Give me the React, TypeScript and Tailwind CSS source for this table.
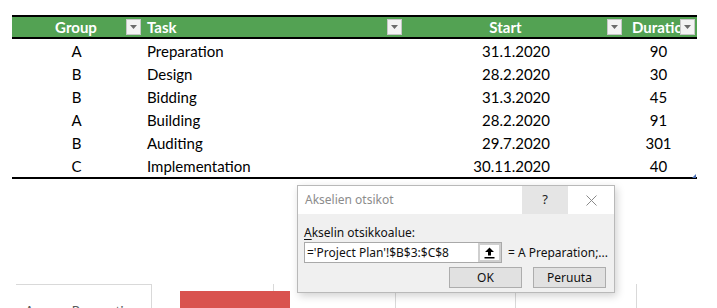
import React from 'react';

type Row = { group: string; task: string; start: string; duration: number };

const rows: Row[] = [
  { group: 'A', task: 'Preparation', start: '31.1.2020', duration: 90 },
  { group: 'B', task: 'Design', start: '28.2.2020', duration: 30 },
  { group: 'B', task: 'Bidding', start: '31.3.2020', duration: 45 },
  { group: 'A', task: 'Building', start: '28.2.2020', duration: 91 },
  { group: 'B', task: 'Auditing', start: '29.7.2020', duration: 301 },
  { group: 'C', task: 'Implementation', start: '30.11.2020', duration: 40 },
];

const FilterButton = () => (
  <div className="w-[15px] h-[16px] shrink-0 bg-[#f3f3f3] border border-[#c6c6c6] flex items-center justify-center">
    <svg width="7" height="4" viewBox="0 0 7 4">
      <path d="M0 0 L7 0 L3.5 4 Z" fill="#6b6b6b" />
    </svg>
  </div>
);

const UploadIcon = () => (
  <svg width="11" height="12" viewBox="0 0 11 12">
    <path d="M5.5 0.5 L10 5 L7 5 L7 8.5 L4 8.5 L4 5 L1 5 Z" fill="#000" />
    <rect x="0.5" y="10" width="10" height="1.5" fill="#000" />
  </svg>
);

const Dialog = () => (
  <div
    className="absolute left-[297px] top-[185px] w-[318px] h-[108px] border border-[#b9b9b9] bg-[#f0f0f0] shadow-[2px_3px_8px_rgba(0,0,0,0.18)] flex flex-col"
    style={{ fontFamily: '"Noto Sans", "Open Sans", sans-serif' }}
  >
    <div className="h-[28px] bg-white flex items-stretch">
      <div className="flex-1 flex items-center pl-[7px] text-[12px] text-[#8c8c8c]">Akselien otsikot</div>
      <div className="w-[46px] bg-[#e5e5e5] flex items-center justify-center text-[13px] text-[#222]">?</div>
      <div className="w-[46px] flex items-center justify-center">
        <svg width="11" height="11" viewBox="0 0 11 11">
          <path d="M0.5 0.5 L10.5 10.5 M10.5 0.5 L0.5 10.5" stroke="#8a8a8a" strokeWidth="1" />
        </svg>
      </div>
    </div>
    <div className="px-[6px] pt-[11px] flex flex-col">
      <div className="text-[12px] leading-[15px] text-[#111]">
        <span className="underline underline-offset-2">A</span>kselin otsikkoalue:
      </div>
      <div className="mt-[2px] flex items-center">
        <div className="w-[202px] h-[21px] border border-[#a9a9a9] bg-white flex items-stretch">
          <div className="flex-1 flex items-center pl-[2px] text-[12px] text-[#111] whitespace-nowrap overflow-hidden">
            ='Project Plan'!$B$3:$C$8
          </div>
          <div className="w-[23px] border-[2px] border-[#cfcfcf] bg-white flex items-center justify-center">
            <UploadIcon />
          </div>
        </div>
        <div className="ml-[6px] text-[12px] text-[#111] whitespace-nowrap">= A Preparation;...</div>
      </div>
      <div className="mt-[4px] flex justify-end gap-[11px] pr-[2px]">
        <div className="w-[73px] h-[21px] bg-[#e1e1e1] border border-[#adadad] flex items-center justify-center text-[12px] text-[#111]">OK</div>
        <div className="w-[73px] h-[21px] bg-[#e1e1e1] border border-[#adadad] flex items-center justify-center text-[12px] text-[#111]">Peruuta</div>
      </div>
    </div>
  </div>
);

const App: React.FC = () => {
  return (
    <div className="relative w-[717px] h-[308px] overflow-hidden bg-white" style={{ fontFamily: 'Lato, "Noto Sans", sans-serif' }}>
      <div className="pt-[15px] pl-[12px]">
        <div className="w-[685px]">
          {/* header */}
          <div className="h-[24px] border-t-2 border-b-2 border-black bg-[#53a253] flex items-center text-white font-bold text-[15px]">
            <div className="w-[130px] flex items-center">
              <div className="flex-1 text-center pl-[14px]">Group</div>
              <FilterButton />
              <div className="w-[1px]" />
            </div>
            <div className="w-[260px] flex items-center">
              <div className="flex-1 pl-[5px]">Task</div>
              <FilterButton />
            </div>
            <div className="w-[220px] flex items-center">
              <div className="flex-1 text-center pl-[2px]">Start</div>
              <FilterButton />
            </div>
            <div className="w-[75px] flex items-center">
              <div className="flex-1 pl-[10px] whitespace-nowrap overflow-hidden">Duration</div>
              <FilterButton />
              <div className="w-[2px]" />
            </div>
          </div>
          {/* rows */}
          {rows.map((r) => (
            <div key={r.task} className="h-[23px] flex items-center pt-[1px] text-[15px] text-black">
              <div className="w-[130px] text-center pr-[1px]">{r.group}</div>
              <div className="w-[260px] pl-[5px]">{r.task}</div>
              <div className="w-[220px] text-right pr-[72px]">{r.start}</div>
              <div className="w-[75px] text-center pr-[2px]">{r.duration}</div>
            </div>
          ))}
          <div className="relative border-t-2 border-black">
            <svg className="absolute right-[1px] -top-[5px]" width="4" height="4" viewBox="0 0 4 4">
              <path d="M4 0 L4 4 L0 4 Z" fill="#4a6fb5" />
            </svg>
          </div>
        </div>
      </div>

      {/* chart below */}
      <div className="mt-[105px] ml-[16px] flex h-[24px]">
        <div className="w-[136px] border-t border-r border-[#d9d9d9] relative overflow-hidden text-[13px] text-[#595959]">
          <div className="flex pt-[17px] whitespace-nowrap">
            <span className="ml-[9px]">A</span>
            <span className="ml-[38px]">Preparation</span>
          </div>
        </div>
        <div className="relative flex">
          <div className="w-[122px] border-r border-[#d9d9d9]" />
          <div className="w-[122px] border-r border-[#d9d9d9]" />
          <div className="w-[120px] border-r border-[#d9d9d9]" />
          <div className="w-[121px] border-r border-[#d9d9d9]" />
          <div className="absolute left-[28px] top-[7px] w-[110px] h-[30px] bg-[#d9534f]" />
        </div>
      </div>

      <Dialog />
    </div>
  );
};

export default App;
